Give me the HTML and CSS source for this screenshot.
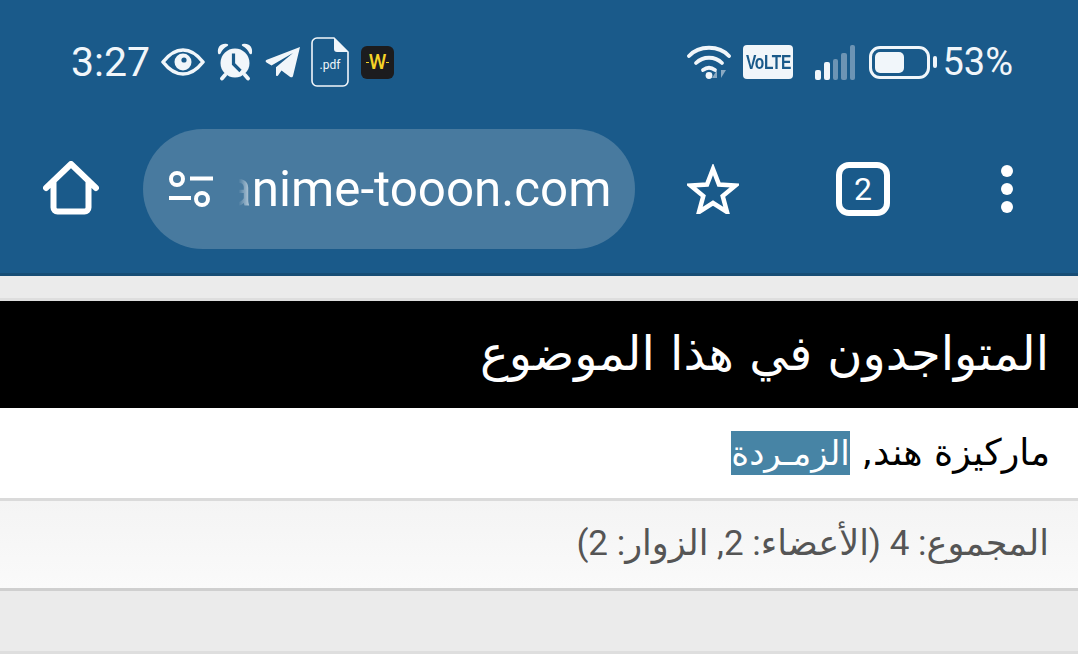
FILE: index.html
```html
<!DOCTYPE html>
<html lang="ar">
<head>
    <meta charset="UTF-8">
    <meta name="viewport" content="width=device-width, initial-scale=1.0">
    <title>anime-tooon.com</title>
    <link rel="stylesheet" href="styles.css">
</head>
<body>
    <header class="phone-top">
        <div class="status-bar">
            <div class="status-left">
                <span class="clock">3:27</span>
                <svg class="ic-eye" width="44" height="28" viewBox="0 0 44 28">
                    <path d="M2 14C9 5 15 2 22 2s13 3 20 12c-7 9-13 12-20 12S9 23 2 14z" fill="none" stroke="#f1f6fa" stroke-width="3.6" stroke-linejoin="round"/>
                    <circle cx="22" cy="14" r="8.5" fill="#f1f6fa"/>
                    <circle cx="23" cy="12" r="2.6" fill="#1a5a8a"/>
                </svg>
                <svg class="ic-alarm" width="36" height="38" viewBox="0 0 36 38">
                    <circle cx="18" cy="20" r="14.500" fill="#f1f6fa"/>
                    <path d="M1 10C0 4 4 0 10 1c1.500.3 1.500 1.300.5 2C7 5 5 7 3.500 10.500c-.6 1.200-2.300 1-2.500-.5zM35 10c1-6-3-10-9-9-1.500.3-1.500 1.300-.5 2 3.500 2 5.500 4 7 7.500.6 1.200 2.300 1 2.500-.5z" fill="#f1f6fa"/>
                    <path d="M8 32l-3 3.500M28 32l3 3.500" stroke="#f1f6fa" stroke-width="3.800" stroke-linecap="round"/>
                    <path d="M16.500 10.500v10.500l7 7" fill="none" stroke="#1a5a8a" stroke-width="3.200"/>
                </svg>
                <svg class="ic-telegram" width="36" height="32" viewBox="0 0 36 32">
                    <path d="M35 1L28 30c-.4 1.500-1.500 1.700-2.800.9l-8.700-6.400-3.500 5c-.8 1-2 .6-2-.6v-7.600L28 7 6.500 19.500 1.500 16.500c-1.300-.9-1.200-2.100.4-2.800z" fill="#f1f6fa"/>
                </svg>
                <svg class="ic-pdf" width="38" height="50" viewBox="0 0 38 50">
                    <path d="M6 1h17l14 14v29a5 5 0 0 1-5 5H6a5 5 0 0 1-5-5V6a5 5 0 0 1 5-5z" fill="none" stroke="#f1f6fa" stroke-width="1.600"/>
                    <path d="M23 1l14 14H26a3 3 0 0 1-3-3z" fill="#f1f6fa"/>
                    <text x="19" y="32" class="pdf-label" text-anchor="middle">.pdf</text>
                </svg>
                <span class="app-w">W</span>
            </div>
            <div class="status-right">
                <svg class="ic-wifi" width="46" height="36" viewBox="0 0 46 36">
                    <g fill="none" stroke="#f1f6fa" stroke-width="3.800" stroke-linecap="round">
                        <path d="M2 12C12 1 32 1 42 12"/>
                        <path d="M9 19c7-7 19-7 26 0"/>
                        <path d="M16 26c4-3 8-3 12 0"/>
                    </g>
                    <circle cx="22" cy="31.500" r="3.400" fill="#f1f6fa"/>
                    <path d="M30 34v-8l-5 8zM34 26v8l5-8z" fill="#8aa9c2"/>
                </svg>
                <span class="volte"><span class="volte-text">VoLTE</span></span>
                <div class="signal">
                    <i class="bar b1"></i>
                    <i class="bar b2"></i>
                    <i class="bar b3 dim"></i>
                    <i class="bar b4 dim"></i>
                    <i class="bar b5 dim"></i>
                </div>
                <div class="battery">
                    <div class="battery-body"><div class="battery-fill"></div></div>
                    <div class="battery-tip"></div>
                </div>
                <span class="percent">53%</span>
            </div>
        </div>
        <div class="toolbar">
            <svg class="ic-home" width="56" height="56" viewBox="0 0 56 56">
                <path d="M3 27L28 3l25 24M10.500 21v25.500a4 4 0 0 0 4 4h27a4 4 0 0 0 4-4V21" fill="none" stroke="#fff" stroke-width="6" stroke-linecap="round" stroke-linejoin="round"/>
            </svg>
            <div class="omnibox">
                <svg class="ic-tune" width="46" height="38" viewBox="0 0 46 38">
                    <g fill="none" stroke="#fff" stroke-width="4">
                        <circle cx="9" cy="9" r="6"/>
                        <circle cx="34" cy="29" r="6"/>
                        <path d="M22 8.500h23M1 28h22"/>
                    </g>
                </svg>
                <span class="url"><span class="url-fade">a</span>nime-tooon.com</span>
            </div>
            <svg class="ic-star" width="52" height="50" viewBox="0 0 52 50">
                <path d="M26 5l6 15.500 16.500 1-12.800 10.500 4.300 16-14-9-14 9 4.300-16L3.500 21.500l16.500-1z" fill="none" stroke="#fff" stroke-width="4.500"/>
            </svg>
            <div class="tabs">2</div>
            <div class="dots"><i></i><i></i><i></i></div>
        </div>
    </header>

    <div class="spacer-top"></div>

    <main class="panel" dir="rtl">
        <h2 class="panel-title">المتواجدون في هذا الموضوع</h2>
        <div class="panel-row">ماركيزة هند, <span class="highlight">الزمـردة</span></div>
        <div class="panel-foot">المجموع: 4 (الأعضاء: 2, الزوار: 2)</div>
    </main>

    <div class="spacer-bottom"></div>
    <div class="page-end"></div>
</body>
</html>
```
FILE: styles.css
```css
html, body {
    margin: 0;
    padding: 0;
}

body {
    width: 1078px;
    height: 670px;
    overflow: hidden;
    background-color: #fff;
    font-family: "DejaVu Sans", sans-serif;
}

.phone-top {
    height: 276px;
    box-sizing: border-box;
    background-color: #1a5a8a;
    border-bottom: 3px solid #174d75;
    display: flex;
    flex-direction: column;
    font-family: Roboto, sans-serif;
}

.status-bar {
    height: 129px;
    box-sizing: border-box;
    padding: 36px 65px 0 71px;
    display: flex;
    justify-content: space-between;
    align-items: flex-start;
    color: #f1f6fa;
}

.status-left, .status-right {
    display: flex;
    align-items: center;
    height: 52px;
}

.clock {
    font-size: 41px;
    width: 78px;
    margin-right: 12px;
    white-space: nowrap;
}

.ic-eye { margin-right: 12px; }
.ic-alarm { margin-right: 12px; }
.ic-telegram { margin-right: 10px; }
.ic-pdf { margin-right: 12px; }

.pdf-label {
    font-family: Roboto, sans-serif;
    font-size: 12px;
    fill: #f1f6fa;
}

.app-w {
    width: 33px;
    height: 33px;
    border-radius: 6px;
    background-color: #1c1c1e;
    color: #f5d327;
    font-size: 20px;
    font-weight: 500;
    display: flex;
    align-items: center;
    justify-content: center;
}

.app-w::before, .app-w::after {
    content: "";
    width: 3px;
    height: 1px;
    background-color: #f5d327;
}

.ic-wifi { margin-right: 10px; }

.volte {
    width: 50px;
    height: 34px;
    border-radius: 4px;
    background-color: #f1f6fa;
    color: #1a5a8a;
    display: flex;
    align-items: center;
    justify-content: center;
    margin-right: 22px;
}

.volte-text {
    font-family: "Liberation Sans", sans-serif;
    font-size: 21px;
    font-weight: 700;
    letter-spacing: -0.500px;
    transform: scaleX(0.74);
    white-space: nowrap;
}

.signal {
    display: flex;
    align-items: flex-end;
    gap: 3px;
    height: 36px;
    margin-right: 14px;
}

.bar {
    width: 5.600px;
    border-radius: 2px;
    background-color: #f1f6fa;
}

.bar.dim { background-color: #6d94b4; }
.b1 { height: 10px; }
.b2 { height: 18px; }
.b3 { height: 21px; }
.b4 { height: 27px; }
.b5 { height: 35px; }

.battery {
    display: flex;
    align-items: center;
    margin-right: 5px;
}

.battery-body {
    width: 61px;
    height: 33px;
    box-sizing: border-box;
    border: 3px solid #f1f6fa;
    border-radius: 11px;
    padding: 3px;
    margin-right: 3px;
}

.battery-fill {
    width: 29px;
    height: 100%;
    border-radius: 5px;
    background-color: #f1f6fa;
}

.battery-tip {
    width: 4px;
    height: 12px;
    border-radius: 2px;
    background-color: #f1f6fa;
}

.percent {
    font-size: 38px;
}

.toolbar {
    height: 120px;
    box-sizing: border-box;
    padding-left: 43px;
    display: flex;
    align-items: center;
}

.ic-home {
    margin-right: 44px;
}

.omnibox {
    width: 492px;
    height: 120px;
    box-sizing: border-box;
    padding-left: 25px;
    border-radius: 60px;
    background-color: #487a9f;
    display: flex;
    align-items: center;
    margin-right: 52px;
    color: #fff;
}

.ic-tune {
    flex-shrink: 0;
    margin-right: 11px;
}

.url {
    font-size: 49.300px;
    white-space: nowrap;
}

.url-fade {
    background: linear-gradient(90deg, transparent 50%, rgba(255, 255, 255, 0.75));
    -webkit-background-clip: text;
    background-clip: text;
    color: transparent;
}

.ic-star {
    margin-right: 97px;
}

.tabs {
    width: 54px;
    height: 54px;
    box-sizing: border-box;
    border: 6px solid #fff;
    border-radius: 13px;
    color: #fff;
    font-size: 32px;
    display: flex;
    align-items: center;
    justify-content: center;
    margin-right: 111px;
}

.dots {
    display: flex;
    flex-direction: column;
    gap: 6px;
}

.dots i {
    width: 12px;
    height: 12px;
    border-radius: 50%;
    background-color: #fff;
}

.spacer-top {
    height: 22px;
    background-color: #ebebeb;
    border-bottom: 3px solid #dedede;
}

.panel-title {
    margin: 0;
    height: 107px;
    box-sizing: border-box;
    padding: 0 29px;
    background-color: #000;
    color: #fff;
    font-size: 48px;
    font-weight: 400;
    line-height: 104px;
}

.panel-row {
    height: 93px;
    box-sizing: border-box;
    padding: 22px 28px 0;
    background-color: #fff;
    border-bottom: 3px solid #dadada;
    color: #000;
    font-size: 36.500px;
    line-height: 46px;
}

.highlight {
    padding: 2px 0;
    background-color: #4784a5;
    color: #fff;
    font-size: 34px;
}

.panel-foot {
    height: 90px;
    box-sizing: border-box;
    padding: 0 29px;
    background: linear-gradient(#f4f4f4, #fafafa);
    border-bottom: 3px solid #cfcfcf;
    color: #555;
    font-family: Roboto, "DejaVu Sans", sans-serif;
    font-size: 35px;
    line-height: 86px;
}

.spacer-bottom {
    height: 60px;
    background-color: #ebebeb;
    border-bottom: 3px solid #dedede;
}

.page-end {
    height: 16px;
    background-color: #fff;
}
```
